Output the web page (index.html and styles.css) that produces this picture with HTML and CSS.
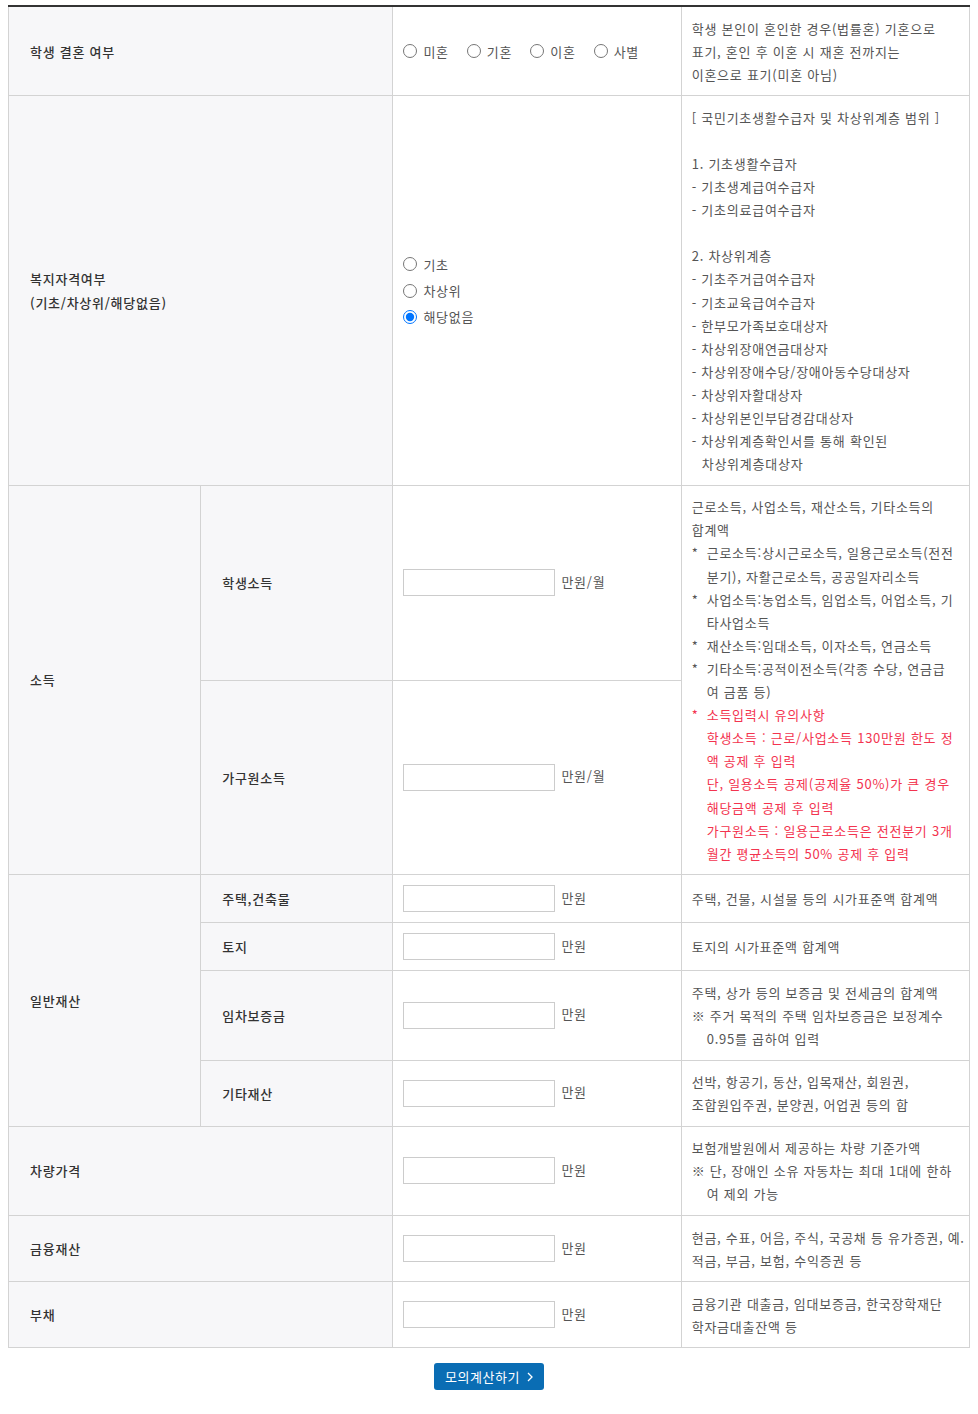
FILE: index.html
```html
<!DOCTYPE html>
<html lang="ko">
<head>
<meta charset="utf-8">
<title>모의계산</title>
<link rel="stylesheet" href="styles.css">
</head>
<body>
<table class="calc">
  <colgroup>
    <col class="c1"><col class="c2"><col class="c3"><col class="c4">
  </colgroup>
  <tbody>
    <tr>
      <th colspan="2" class="lbl">학생 결혼 여부</th>
      <td class="inp">
        <div class="radios-inline">
          <label class="radio"><input type="radio" name="mar"><span>미혼</span></label>
          <label class="radio"><input type="radio" name="mar"><span>기혼</span></label>
          <label class="radio"><input type="radio" name="mar"><span>이혼</span></label>
          <label class="radio"><input type="radio" name="mar"><span>사별</span></label>
        </div>
      </td>
      <td class="desc">학생 본인이 혼인한 경우(법률혼) 기혼으로<br>표기, 혼인 후 이혼 시 재혼 전까지는<br>이혼으로 표기(미혼 아님)</td>
    </tr>
    <tr>
      <th colspan="2" class="lbl">복지자격여부<br>(기초/차상위/해당없음)</th>
      <td class="inp">
        <div class="radios-stack">
          <label class="radio"><input type="radio" name="wel"><span>기초</span></label>
          <label class="radio"><input type="radio" name="wel"><span>차상위</span></label>
          <label class="radio"><input type="radio" name="wel" checked><span>해당없음</span></label>
        </div>
      </td>
      <td class="desc">
        <p>[ 국민기초생활수급자 및 차상위계층 범위 ]</p>
        <p class="blank"></p>
        <p>1. 기초생활수급자</p>
        <p>- 기초생계급여수급자</p>
        <p>- 기초의료급여수급자</p>
        <p class="blank"></p>
        <p>2. 차상위계층</p>
        <p>- 기초주거급여수급자</p>
        <p>- 기초교육급여수급자</p>
        <p>- 한부모가족보호대상자</p>
        <p>- 차상위장애연금대상자</p>
        <p>- 차상위장애수당/장애아동수당대상자</p>
        <p>- 차상위자활대상자</p>
        <p>- 차상위본인부담경감대상자</p>
        <p class="dash">- 차상위계층확인서를 통해 확인된<br>차상위계층대상자</p>
      </td>
    </tr>
    <tr>
      <th rowspan="2" class="lbl">소득</th>
      <th class="lbl">학생소득</th>
      <td class="inp"><div class="field"><input type="text" class="box"><span class="unit">만원/월</span></div></td>
      <td rowspan="2" class="desc">
        <p>근로소득, 사업소득, 재산소득, 기타소득의<br>합계액</p>
        <p class="star">근로소득:상시근로소득, 일용근로소득(전전<br>분기), 자활근로소득, 공공일자리소득</p>
        <p class="star">사업소득:농업소득, 임업소득, 어업소득, 기<br>타사업소득</p>
        <p class="star">재산소득:임대소득, 이자소득, 연금소득</p>
        <p class="star">기타소득:공적이전소득(각종 수당, 연금급<br>여 금품 등)</p>
        <p class="star red">소득입력시 유의사항<br>학생소득 : 근로/사업소득 130만원 한도 정<br>액 공제 후 입력<br>단, 일용소득 공제(공제율 50%)가 큰 경우<br>해당금액 공제 후 입력<br>가구원소득 : 일용근로소득은 전전분기 3개<br>월간 평균소득의 50% 공제 후 입력</p>
      </td>
    </tr>
    <tr>
      <th class="lbl">가구원소득</th>
      <td class="inp"><div class="field"><input type="text" class="box"><span class="unit">만원/월</span></div></td>
    </tr>
    <tr>
      <th rowspan="4" class="lbl">일반재산</th>
      <th class="lbl">주택,건축물</th>
      <td class="inp"><div class="field"><input type="text" class="box"><span class="unit">만원</span></div></td>
      <td class="desc">주택, 건물, 시설물 등의 시가표준액 합계액</td>
    </tr>
    <tr>
      <th class="lbl">토지</th>
      <td class="inp"><div class="field"><input type="text" class="box"><span class="unit">만원</span></div></td>
      <td class="desc">토지의 시가표준액 합계액</td>
    </tr>
    <tr>
      <th class="lbl">임차보증금</th>
      <td class="inp"><div class="field"><input type="text" class="box"><span class="unit">만원</span></div></td>
      <td class="desc">
        <p>주택, 상가 등의 보증금 및 전세금의 합계액</p>
        <p class="note">※ 주거 목적의 주택 임차보증금은 보정계수<br>0.95를 곱하여 입력</p>
      </td>
    </tr>
    <tr>
      <th class="lbl">기타재산</th>
      <td class="inp"><div class="field"><input type="text" class="box"><span class="unit">만원</span></div></td>
      <td class="desc">선박, 항공기, 동산, 입목재산, 회원권,<br>조합원입주권, 분양권, 어업권 등의 합</td>
    </tr>
    <tr>
      <th colspan="2" class="lbl">차량가격</th>
      <td class="inp"><div class="field"><input type="text" class="box"><span class="unit">만원</span></div></td>
      <td class="desc">
        <p>보험개발원에서 제공하는 차량 기준가액</p>
        <p class="note">※ 단, 장애인 소유 자동차는 최대 1대에 한하<br>여 제외 가능</p>
      </td>
    </tr>
    <tr>
      <th colspan="2" class="lbl">금융재산</th>
      <td class="inp"><div class="field"><input type="text" class="box"><span class="unit">만원</span></div></td>
      <td class="desc">현금, 수표, 어음, 주식, 국공채 등 유가증권, 예.<br>적금, 부금, 보험, 수익증권 등</td>
    </tr>
    <tr>
      <th colspan="2" class="lbl">부채</th>
      <td class="inp"><div class="field"><input type="text" class="box"><span class="unit">만원</span></div></td>
      <td class="desc">금융기관 대출금, 임대보증금, 한국장학재단<br>학자금대출잔액 등</td>
    </tr>
  </tbody>
</table>

<div class="actions">
  <button type="button" class="btn-calc">모의계산하기
    <svg class="chev" width="6" height="10" viewBox="0 0 6 10"><path d="M1 1 L5 5 L1 9" fill="none" stroke="#fff" stroke-width="1.3"/></svg>
  </button>
</div>
</body>
</html>
```
FILE: styles.css
```css
html, body {
  margin: 0;
  padding: 0;
  background: #fff;
}
body {
  padding: 5px 8px 0;
  font-family: "Noto Sans CJK KR", "Noto Sans", sans-serif;
  font-size: 13px;
  letter-spacing: 0.75px;
  color: #555;
}
.calc {
  width: 100%;
  table-layout: fixed;
  border-collapse: collapse;
  border-top: 2px solid #333;
}
.c1, .c2 { width: 20%; }
.c3, .c4 { width: 30%; }
.calc th, .calc td {
  border: 1px solid #d3d3d3;
  vertical-align: middle;
  line-height: 23.1px;
}
.calc tr:first-child th, .calc tr:first-child td { border-top: 0; }
.lbl {
  background: #f7f7f9;
  text-align: left;
  font-weight: 500;
  color: #333;
  padding: 10px 21px;
  line-height: 22px;
}
.inp {
  padding: 10px 10px;
}
.desc {
  padding: 9.5px 10px;
  white-space: nowrap;
  color: #555;
}
.desc p { margin: 0; }
.desc .blank { height: 23.1px; }
.desc .dash { padding-left: 10px; text-indent: -10px; }
.desc .star { padding-left: 15px; position: relative; }
.desc .star::before {
  content: "*";
  position: absolute;
  left: 0;
  top: 0;
}
.desc .note { padding-left: 15px; text-indent: -15px; }
.red { color: #f3344f; }

.radios-inline {
  display: flex;
  gap: 18px;
  align-items: center;
}
.radios-stack {
  display: flex;
  flex-direction: column;
  gap: 3px;
}
.radio {
  display: inline-flex;
  align-items: center;
  gap: 6px;
  color: #555;
}
.radio input {
  margin: 0;
  width: 14px;
  height: 14px;
}
.field {
  display: flex;
  align-items: center;
  gap: 6px;
}
.box {
  width: 152px;
  height: 27px;
  box-sizing: border-box;
  border: 1px solid #ccc;
  margin: 0;
  padding: 0 6px;
  font: inherit;
}
.unit {
  color: #555;
  margin-top: -3px;
}
.actions {
  display: flex;
  justify-content: center;
  padding-top: 15px;
}
.btn-calc {
  display: inline-flex;
  align-items: center;
  gap: 7px;
  height: 27px;
  padding: 0 11px;
  border: 0;
  border-radius: 3px;
  background: #0a6db4;
  color: #fff;
  font: inherit;
  font-size: 13px;
  letter-spacing: 0.5px;
}
```
